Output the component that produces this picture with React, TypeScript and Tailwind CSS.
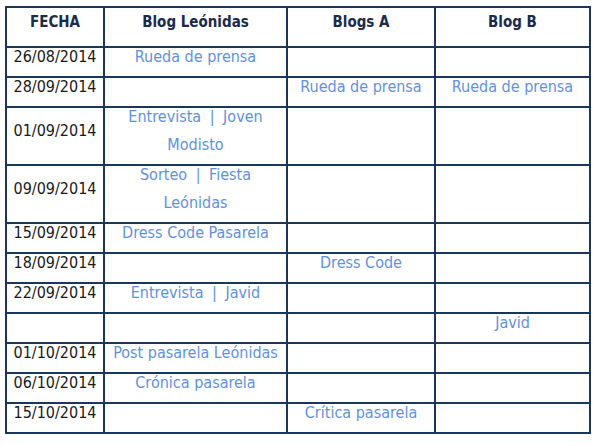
import React from "react";

type Row = {
  date: string;
  leonidas: string[];
  blogsA: string[];
  blogB: string[];
};

const rows: Row[] = [
  { date: "26/08/2014", leonidas: ["Rueda de prensa"], blogsA: [], blogB: [] },
  { date: "28/09/2014", leonidas: [], blogsA: ["Rueda de prensa"], blogB: ["Rueda de prensa"] },
  { date: "01/09/2014", leonidas: ["Entrevista | Joven", "Modisto"], blogsA: [], blogB: [] },
  { date: "09/09/2014", leonidas: ["Sorteo | Fiesta", "Leónidas"], blogsA: [], blogB: [] },
  { date: "15/09/2014", leonidas: ["Dress Code Pasarela"], blogsA: [], blogB: [] },
  { date: "18/09/2014", leonidas: [], blogsA: ["Dress Code"], blogB: [] },
  { date: "22/09/2014", leonidas: ["Entrevista | Javid"], blogsA: [], blogB: [] },
  { date: "", leonidas: [], blogsA: [], blogB: ["Javid"] },
  { date: "01/10/2014", leonidas: ["Post pasarela Leónidas"], blogsA: [], blogB: [] },
  { date: "06/10/2014", leonidas: ["Crónica pasarela"], blogsA: [], blogB: [] },
  { date: "15/10/2014", leonidas: [], blogsA: ["Crítica pasarela"], blogB: [] },
];

// pipes in the original have extra room around them
function renderLine(l: string) {
  const parts = l.split(" | ");
  if (parts.length === 1) return l;
  return (
    <>
      {parts[0]}
      <span className="mx-[4px]"> | </span>
      {parts[1]}
    </>
  );
}

function LinkCell({ lines }: { lines: string[] }) {
  return (
    <td className="border-2 border-[#1b365d] p-0 align-middle text-center">
      {lines.length === 0 ? (
        <p className="mb-[10px] leading-[18px]">&nbsp;</p>
      ) : (
        lines.map((l) => (
          <p key={l} className="mb-[10px] leading-[18px] text-[#5f91e0] whitespace-nowrap">
            {renderLine(l)}
          </p>
        ))
      )}
    </td>
  );
}

export default function App() {
  return (
    <div
      className="w-[595px] h-[445px] bg-white pl-[5px] pt-[6px]"
      style={{ fontFamily: '"DejaVu Sans Condensed", "DejaVu Sans", sans-serif' }}
    >
      <table className="table-fixed border-collapse w-[584px] text-[16px]">
        <colgroup>
          <col className="w-[98px]" />
          <col className="w-[183px]" />
          <col className="w-[148px]" />
          <col className="w-[155px]" />
        </colgroup>
        <thead>
          <tr className="h-[40px]">
            {["FECHA", "Blog Leónidas", "Blogs A", "Blog B"].map((h) => (
              <th
                key={h}
                className="border-2 border-[#1b365d] p-0 align-middle text-center font-bold text-[15px] text-[#1c2b4a]"
              >
                <p className="mb-[10px] leading-[18px]">{h}</p>
              </th>
            ))}
          </tr>
        </thead>
        <tbody>
          {rows.map((r, i) => (
            <tr key={i}>
              <td className="border-2 border-[#1b365d] p-0 align-middle text-center text-[#1a1a1a]">
                <p className="mb-[10px] leading-[18px]">{r.date || "\u00a0"}</p>
              </td>
              <LinkCell lines={r.leonidas} />
              <LinkCell lines={r.blogsA} />
              <LinkCell lines={r.blogB} />
            </tr>
          ))}
        </tbody>
      </table>
    </div>
  );
}
